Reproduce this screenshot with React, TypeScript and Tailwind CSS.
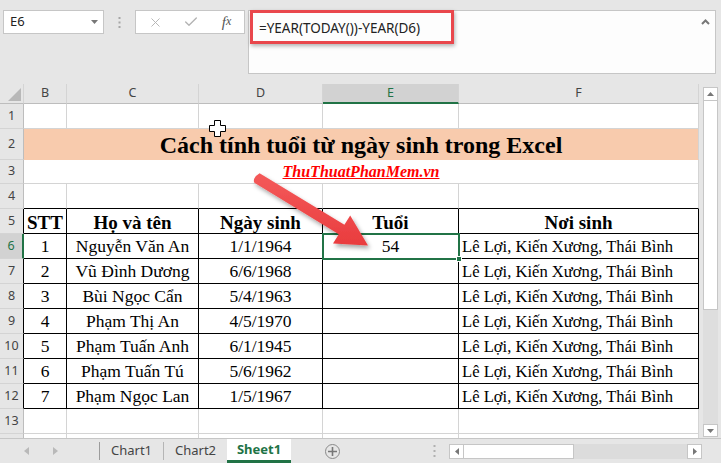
import { X, Check } from "lucide-react";

const serif = "font-['Liberation_Serif','Times_New_Roman',serif]";
const ui = "font-['Noto_Sans','Open_Sans',sans-serif]";

const people = [
  ["1", "Nguyễn Văn An", "1/1/1964", "54"],
  ["2", "Vũ Đình Dương", "6/6/1968", ""],
  ["3", "Bùi Ngọc Cẩn", "5/4/1963", ""],
  ["4", "Phạm Thị An", "4/5/1970", ""],
  ["5", "Phạm Tuấn Anh", "6/1/1945", ""],
  ["6", "Phạm Tuấn Tú", "5/6/1962", ""],
  ["7", "Phạm Ngọc Lan", "1/5/1967", ""],
];
const place = "Lê Lợi, Kiến Xương, Thái Bình";

const cols = [
  { key: "B", w: "w-[43px]" },
  { key: "C", w: "w-[132px]" },
  { key: "D", w: "w-[124px]" },
  { key: "E", w: "w-[136px]" },
  { key: "F", w: "w-[240px]" },
];

// row header edge styles
const headEdge = {
  grey: "border-r-[#bdbdbd] bg-[#e6e6e6] text-[#444]",
  black: "border-r-black bg-[#e6e6e6] text-[#444]",
  green: "border-r-[#217346] border-r-2 bg-[#d2d2d2] text-[#217346]",
};

function RowHead({ n, edge }: { n: string; edge: keyof typeof headEdge }) {
  return (
    <div
      className={`w-[24px] shrink-0 flex items-center justify-center border-r border-b border-b-[#d4d4d4] text-[12.5px] ${ui} ${headEdge[edge]}`}
    >
      {n}
    </div>
  );
}

function Row({
  n,
  h,
  edge = "grey",
  children,
}: {
  n: string;
  h: string;
  edge?: keyof typeof headEdge;
  children: React.ReactNode;
}) {
  return (
    <div className={`flex ${h}`}>
      <RowHead n={n} edge={edge} />
      {children}
    </div>
  );
}

function EmptyCells({ bottom = "border-b-[#d4d4d4]" }: { bottom?: string }) {
  return (
    <>
      {cols.map((c) => (
        <div key={c.key} className={`${c.w} shrink-0 border-r border-b border-r-[#d4d4d4] ${bottom}`} />
      ))}
    </>
  );
}

function TableRow({ cells, head }: { cells: string[]; head?: boolean }) {
  return (
    <>
      {cells.map((t, i) => {
        const txt = head ? "font-bold text-[19px]" : i === 4 ? "text-[16.6px]" : "text-[17.5px]";
        return (
          <div
            key={i}
            className={`${cols[i].w} shrink-0 flex items-center border-r border-b border-black ${
              i === 4 && !head ? "justify-start pl-[3px]" : "justify-center"
            } ${serif} ${txt} text-black whitespace-nowrap overflow-hidden leading-none pt-[2px]`}
          >
            {t}
          </div>
        );
      })}
    </>
  );
}

function Toolbar() {
  return (
    <div className="h-[84px] bg-[#e6e6e6] flex items-start pt-[10px] pl-[3px]">
      <div className={`w-[101px] h-[24px] bg-white border border-[#c6c6c6] flex items-center justify-between pl-[6px] pr-[5px] text-[13px] text-[#222] ${ui}`}>
        <span>E6</span>
        <svg width="7" height="4" viewBox="0 0 7 4">
          <path d="M0 0h7L3.5 4z" fill="#777" />
        </svg>
      </div>
      <div className="w-[31px] h-[24px] flex items-center justify-center">
        <svg width="3" height="11" viewBox="0 0 3 11">
          <rect x="0.5" y="0" width="2" height="2" fill="#a6a6a6" />
          <rect x="0.5" y="4.5" width="2" height="2" fill="#a6a6a6" />
          <rect x="0.5" y="9" width="2" height="2" fill="#a6a6a6" />
        </svg>
      </div>
      <div className="w-[110px] h-[24px] bg-white border border-[#c6c6c6] flex items-center">
        <div className="w-[36px] flex justify-center pl-[2px]">
          <X size={15} strokeWidth={1.5} className="text-[#b3b3b3]" />
        </div>
        <div className="w-[37px] flex justify-center">
          <Check size={16} strokeWidth={2} className="text-[#b3b3b3]" />
        </div>
        <div className={`w-[35px] flex justify-center italic text-[15px] text-[#555] ${serif}`}>
          f<span className="text-[12px] translate-y-[1px]">x</span>
        </div>
      </div>
      <div className="w-[3px]" />
      <div className="relative w-[468px] h-[64px] bg-[#fdfdfd] border border-[#c6c6c6] pl-[10px] pt-[4px]">
        <span className={`text-[13.5px] text-[#222] ${ui}`}>=YEAR(TODAY())-YEAR(D6)</span>
        <svg className="absolute right-[5px] top-[8px]" width="9" height="6" viewBox="0 0 9 6">
          <path d="M1 5l3.5-3.5L8 5" stroke="#777" strokeWidth="2" fill="none" />
        </svg>
      </div>
    </div>
  );
}

function ColumnHeader() {
  return (
    <div className={`flex h-[20px] text-[12.5px] ${ui}`}>
      <div className="w-[24px] shrink-0 border-r border-b border-r-[#d4d4d4] border-b-[#bdbdbd] bg-[#e6e6e6] relative">
        <svg className="absolute right-[2px] bottom-[2px]" width="13" height="13" viewBox="0 0 13 13">
          <path d="M13 0v13H0z" fill="#b8b8b8" />
        </svg>
      </div>
      {cols.map((c) =>
        c.key === "E" ? (
          <div
            key={c.key}
            className={`${c.w} shrink-0 flex items-center justify-center border-r border-r-[#d4d4d4] border-b-2 border-b-[#217346] bg-[#d2d2d2] text-[#217346]`}
          >
            {c.key}
          </div>
        ) : (
          <div
            key={c.key}
            className={`${c.w} shrink-0 flex items-center justify-center border-r border-b border-r-[#d4d4d4] border-b-[#bdbdbd] bg-[#e6e6e6] text-[#444]`}
          >
            {c.key}
          </div>
        )
      )}
    </div>
  );
}

function VScroll() {
  return (
    <div className="w-[22px] bg-[#e6e6e6] pl-[4px] pt-[3px]">
      <div className="w-[15px] h-[350px] flex flex-col bg-[#dedede]">
        <div className="h-[14px] bg-white border border-[#c6c6c6] flex items-center justify-center">
          <svg width="7" height="4" viewBox="0 0 7 4">
            <path d="M0 4h7L3.5 0z" fill="#777" />
          </svg>
        </div>
        <div className="h-[209px] bg-white border border-t-0 border-[#c6c6c6]" />
        <div className="flex-1" />
        <div className="h-[13px] bg-white border border-[#c6c6c6] flex items-center justify-center">
          <svg width="7" height="4" viewBox="0 0 7 4">
            <path d="M0 0h7L3.5 4z" fill="#777" />
          </svg>
        </div>
      </div>
    </div>
  );
}

function TabBar() {
  return (
    <div className={`h-[25px] bg-[#e6e6e6] border-t border-[#c6c6c6] flex items-stretch text-[13px] ${ui}`}>
      <div className="w-[99px] flex items-center">
        <svg className="ml-[24px]" width="5" height="8" viewBox="0 0 5 8">
          <path d="M5 0v8L0 4z" fill="#b9b9b9" />
        </svg>
        <svg className="ml-[24px]" width="5" height="8" viewBox="0 0 5 8">
          <path d="M0 0v8l5-4z" fill="#b9b9b9" />
        </svg>
      </div>
      <div className="w-px bg-[#9c9c9c] my-[3px]" />
      <div className="w-[63px] flex items-center justify-center text-[#444]">Chart1</div>
      <div className="w-px bg-[#b5b5b5] my-[3px]" />
      <div className="w-[63px] flex items-center justify-center text-[#444]">Chart2</div>
      <div className="w-[64px] bg-white flex items-center justify-center font-bold text-[#217346] border-b-[3px] border-[#217346]">
        Sheet1
      </div>
      <div className="w-[142px] flex items-center">
        <div className="ml-[34px] w-[15px] h-[15px] rounded-full border border-[#8a8a8a] flex items-center justify-center">
          <svg width="9" height="9" viewBox="0 0 9 9">
            <path d="M4.5 0v9M0 4.5h9" stroke="#777" strokeWidth="1.6" />
          </svg>
        </div>
      </div>
      <div className="w-[16px] flex items-center">
        <svg width="3" height="12" viewBox="0 0 3 12">
          <rect x="0.5" y="0" width="2" height="2" fill="#b0b0b0" />
          <rect x="0.5" y="5" width="2" height="2" fill="#b0b0b0" />
          <rect x="0.5" y="10" width="2" height="2" fill="#b0b0b0" />
        </svg>
      </div>
      <div className="w-[253px] flex items-center">
        <div className="w-full h-[15px] flex bg-[#dcdcdc]">
          <div className="w-[15px] bg-white border border-[#c6c6c6] flex items-center justify-center">
            <svg width="4" height="7" viewBox="0 0 4 7">
              <path d="M4 0v7L0 3.5z" fill="#777" />
            </svg>
          </div>
          <div className="w-[110px] bg-white border border-l-0 border-[#c6c6c6]" />
          <div className="flex-1" />
          <div className="w-[15px] bg-white border border-[#c6c6c6] flex items-center justify-center">
            <svg width="4" height="7" viewBox="0 0 4 7">
              <path d="M0 0v7l4-3.5z" fill="#777" />
            </svg>
          </div>
        </div>
      </div>
    </div>
  );
}

export default function App() {
  return (
    <div className="relative w-[721px] h-[463px] overflow-hidden bg-[#e6e6e6] select-none">
      <Toolbar />
      <div className="flex h-[354px]">
        <div className="w-[699px] bg-white overflow-hidden">
          <ColumnHeader />
          <Row n="1" h="h-[25px]">
            <EmptyCells />
          </Row>
          <Row n="2" h="h-[31px]">
            <div className={`w-[675px] shrink-0 flex items-center justify-center bg-[#f8cbad] border-r border-r-[#d4d4d4] border-b border-b-[#f8cbad] font-bold text-[24px] text-black leading-none pt-[2px] ${serif}`}>
              Cách tính tuổi từ ngày sinh trong Excel
            </div>
          </Row>
          <Row n="3" h="h-[24px]">
            <div className={`w-[675px] shrink-0 flex items-center justify-center border-r border-b border-[#d4d4d4] font-bold italic underline text-[16px] text-[#ff0000] ${serif}`}>
              ThuThuatPhanMem.vn
            </div>
          </Row>
          <Row n="4" h="h-[25px]">
            <EmptyCells bottom="border-b-black" />
          </Row>
          <Row n="5" h="h-[25px]" edge="black">
            <TableRow head cells={["STT", "Họ và tên", "Ngày sinh", "Tuổi", "Nơi sinh"]} />
          </Row>
          {people.map((p, i) => (
            <Row key={p[0]} n={String(i + 6)} h="h-[25px]" edge={i === 0 ? "green" : "black"}>
              <TableRow cells={[...p, place]} />
            </Row>
          ))}
          <Row n="13" h="h-[25px]">
            <EmptyCells />
          </Row>
          <Row n="" h="h-[25px]">
            <EmptyCells />
          </Row>
        </div>
        <VScroll />
      </div>
      <TabBar />

      {/* formula highlight */}
      <div className="absolute left-[250px] top-[10px] w-[204px] h-[34px] border-[3px] border-[#e9474c] shadow-[1px_2px_4px_rgba(0,0,0,0.3)]" />

      {/* active cell E6 */}
      <div className="absolute left-[322px] top-[233px] w-[138px] h-[27px] border-2 border-[#217346]" />
      <div className="absolute left-[456px] top-[256px] w-[6px] h-[6px] bg-[#217346] border border-white" />

      {/* cell cursor */}
      <svg className="absolute left-[209px] top-[120px]" width="17" height="17" viewBox="0 0 17 17">
        <path
          d="M5.5 0.5h6v5h5v6h-5v5h-6v-5h-5v-6h5z"
          fill="#fff"
          stroke="#000"
          strokeWidth="1"
        />
      </svg>

      {/* red arrow */}
      <svg className="absolute left-0 top-0 pointer-events-none" width="721" height="463" viewBox="0 0 721 463">
        <defs>
          <linearGradient id="arrowFill" x1="0" y1="0" x2="0" y2="1">
            <stop offset="0" stopColor="#f45a5a" />
            <stop offset="1" stopColor="#e93c3e" />
          </linearGradient>
          <filter id="arrowShadow" x="-20%" y="-20%" width="140%" height="140%">
            <feDropShadow dx="2" dy="3" stdDeviation="2" floodColor="#000" floodOpacity="0.35" />
          </filter>
        </defs>
        <path
          d="M259.6 173.2 L344.4 224.8 L350.2 215.5 L368 245.5 L333 243.5 L338.8 234.2 L254.4 182.8 Q252 178 259.6 173.2 Z"
          fill="url(#arrowFill)"
          filter="url(#arrowShadow)"
        />
      </svg>
    </div>
  );
}
